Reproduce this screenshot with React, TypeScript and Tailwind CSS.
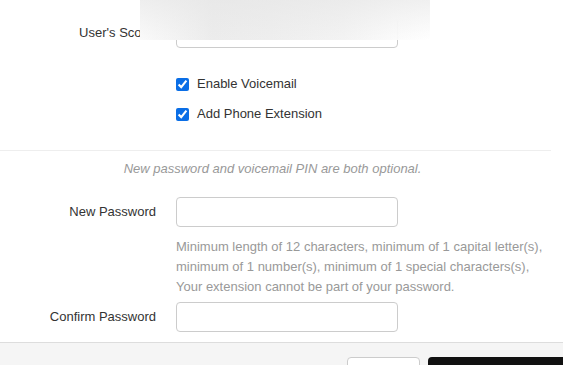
import React from "react";

export default function App() {
  return (
    <div className="relative w-[563px] h-[365px] overflow-hidden bg-white font-['Liberation_Sans',Arial,sans-serif] text-[13px] text-[#333]">
      <div className="flex flex-col">
        {/* User's scope row */}
        <div className="mt-[18px] grid grid-cols-[156px_222px] gap-x-5 items-center">
          <div className="text-right whitespace-nowrap">User's Scope</div>
          <div className="h-[30px] rounded-[4px] border border-[#ccc] bg-white" />
        </div>

        {/* checkboxes */}
        <div className="mt-[26px] flex flex-col gap-[10px] pl-[176px]">
          <label className="flex h-5 items-center gap-[8px]">
            <input type="checkbox" defaultChecked className="m-0 h-[13px] w-[13px] accent-[#0a6ee6]" />
            <span>Enable Voicemail</span>
          </label>
          <label className="flex h-5 items-center gap-[8px]">
            <input type="checkbox" defaultChecked className="m-0 h-[13px] w-[13px] accent-[#0a6ee6]" />
            <span>Add Phone Extension</span>
          </label>
        </div>

        <div className="mt-[26px] h-px w-[551px] bg-[#eeeeee]" />

        <div className="mt-[9px] w-[545px] text-center italic leading-[18px] text-[#999]">
          New password and voicemail PIN are both optional.
        </div>

        <div className="mt-[19px] grid grid-cols-[156px_222px] gap-x-5 items-center">
          <div className="text-right">New Password</div>
          <div className="h-[30px] rounded-[4px] border border-[#ccc] bg-white" />
        </div>

        <div className="mt-[10px] pl-[176px] leading-[20px] text-[#999]">
          <div>Minimum length of 12 characters, minimum of 1 capital letter(s),</div>
          <div>minimum of 1 number(s), minimum of 1 special characters(s),</div>
          <div>Your extension cannot be part of your password.</div>
        </div>

        <div className="mt-[5px] grid grid-cols-[156px_222px] gap-x-5 items-center">
          <div className="text-right">Confirm Password</div>
          <div className="h-[30px] rounded-[4px] border border-[#ccc] bg-white" />
        </div>

        <div className="mt-[10px] h-[30px] border-t border-[#dddddd] bg-[#f5f5f5] pl-[347px] pt-[14px] flex gap-2">
          <div className="h-[30px] w-[73px] shrink-0 rounded-[4px] border border-[#ccc] bg-white" />
          <div className="h-[30px] w-[160px] shrink-0 rounded-[4px] bg-[#111]" />
        </div>
      </div>

      {/* blurred overlay */}
      <div className="absolute left-[140px] top-0 h-[40px] w-[290px] bg-[linear-gradient(to_right,#fafafa_0%,#ececec_25%,#eeeeee_45%,#f3f3f3_70%,#fbfbfb_88%,rgba(255,255,255,0)_100%)]">
        <div className="absolute inset-0 bg-[linear-gradient(to_bottom,rgba(230,230,230,0.6)_0%,rgba(255,255,255,0)_100%)]" />
      </div>
    </div>
  );
}
